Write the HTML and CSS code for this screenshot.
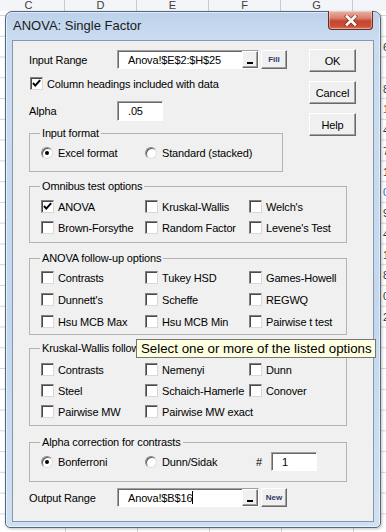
FILE: index.html
```html
<!DOCTYPE html>
<html lang="en">
<head>
  <meta charset="UTF-8" />
  <title>ANOVA: Single Factor</title>
  <link rel="stylesheet" href="styles.css">
</head>
<body>
  <div class="sheet">
    <!-- Spreadsheet column headers behind the dialog -->
    <div class="col-heads">
      <span>C</span><span>D</span><span>E</span><span>F</span><span>G</span>
    </div>

    <div class="desk">
      <div class="edge-left"></div>

      <!-- Dialog window -->
      <div class="window">
        <div class="titlebar">
          <span class="title">ANOVA: Single Factor</span>
          <div class="close-btn">
            <svg width="14" height="11" viewBox="0 0 14 11">
              <path d="M3 1.5 L11 9.5 M11 1.5 L3 9.5" stroke="#5b1b12" stroke-width="4.4" stroke-linecap="square" opacity="0.55"/>
              <path d="M3 1.5 L11 9.5 M11 1.5 L3 9.5" stroke="#fff" stroke-width="2.6" stroke-linecap="square"/>
            </svg>
          </div>
        </div>

        <div class="client">
          <div class="top">
            <div class="top-main">
              <div class="field-row range-row">
                <span class="field-label">Input Range</span>
                <div class="textbox range">
                  <span class="value">Anova!$E$2:$H$25</span>
                  <span class="pick-btn"></span>
                </div>
                <span class="small-btn">Fill</span>
              </div>

              <div class="check-row">
                <span class="check"><svg width="11" height="11" viewBox="0 0 11 11"><path d="M2 5 L4.3 7.6 L9.2 2.2" stroke="#000" stroke-width="2" fill="none"/></svg></span>
                <span>Column headings included with data</span>
              </div>

              <div class="field-row alpha-row">
                <span class="field-label">Alpha</span>
                <div class="textbox short"><span class="value">.05</span></div>
              </div>

              <fieldset class="group input-format">
                <legend>Input format</legend>
                <div class="opts">
                  <span class="opt"><span class="radio on"></span>Excel format</span>
                  <span class="opt"><span class="radio"></span>Standard (stacked)</span>
                </div>
              </fieldset>
            </div>

            <div class="side-buttons">
              <span class="btn">OK</span>
              <span class="btn">Cancel</span>
              <span class="btn">Help</span>
            </div>
          </div>

          <fieldset class="group omnibus">
            <legend>Omnibus test options</legend>
            <div class="opts">
              <span class="opt"><span class="check"><svg width="11" height="11" viewBox="0 0 11 11"><path d="M2 5 L4.3 7.6 L9.2 2.2" stroke="#000" stroke-width="2" fill="none"/></svg></span>ANOVA</span>
              <span class="opt"><span class="check"></span>Kruskal-Wallis</span>
              <span class="opt"><span class="check"></span>Welch's</span>
              <span class="opt"><span class="check"></span>Brown-Forsythe</span>
              <span class="opt"><span class="check"></span>Random Factor</span>
              <span class="opt"><span class="check"></span>Levene's Test</span>
            </div>
          </fieldset>

          <fieldset class="group anova-follow">
            <legend>ANOVA follow-up options</legend>
            <div class="opts">
              <span class="opt"><span class="check"></span>Contrasts</span>
              <span class="opt"><span class="check"></span>Tukey HSD</span>
              <span class="opt"><span class="check"></span>Games-Howell</span>
              <span class="opt"><span class="check"></span>Dunnett's</span>
              <span class="opt"><span class="check"></span>Scheffe</span>
              <span class="opt"><span class="check"></span>REGWQ</span>
              <span class="opt"><span class="check"></span>Hsu MCB Max</span>
              <span class="opt"><span class="check"></span>Hsu MCB Min</span>
              <span class="opt"><span class="check"></span>Pairwise t test</span>
            </div>
          </fieldset>

          <fieldset class="group kw-follow">
            <legend>Kruskal-Wallis follow-up options</legend>
            <div class="opts">
              <span class="opt"><span class="check"></span>Contrasts</span>
              <span class="opt"><span class="check"></span>Nemenyi</span>
              <span class="opt"><span class="check"></span>Dunn</span>
              <span class="opt"><span class="check"></span>Steel</span>
              <span class="opt"><span class="check"></span>Schaich-Hamerle</span>
              <span class="opt"><span class="check"></span>Conover</span>
              <span class="opt"><span class="check"></span>Pairwise MW</span>
              <span class="opt"><span class="check"></span>Pairwise MW exact</span>
            </div>
          </fieldset>

          <fieldset class="group alpha-corr">
            <legend>Alpha correction for contrasts</legend>
            <div class="opts">
              <span class="opt"><span class="radio on"></span>Bonferroni</span>
              <span class="opt"><span class="radio"></span>Dunn/Sidak</span>
              <span class="opt count">#<div class="textbox short"><span class="value">1</span></div></span>
            </div>
          </fieldset>

          <div class="field-row output-row">
            <span class="field-label">Output Range</span>
            <div class="textbox range">
              <span class="value">Anova!$B$16<span class="caret"></span></span>
              <span class="pick-btn"></span>
            </div>
            <span class="small-btn">New</span>
          </div>
        </div>
      </div>

      <div class="edge-right">
        <div>6</div><div>&nbsp;</div><div>8</div><div class="red">1</div><div>4</div>
        <div>7</div><div>1</div><div class="blue">0</div><div>9</div><div>4</div>
        <div>1</div><div>8</div><div>0</div><div>2</div>
      </div>
    </div>

    <div class="tooltip">Select one or more of the listed options</div>
  </div>
</body>
</html>
```

FILE: styles.css
```css
* {
  box-sizing: border-box;
}

body {
  margin: 0;
  width: 386px;
  height: 532px;
  overflow: hidden;
  font-family: 'Liberation Sans', Arial, sans-serif;
  font-size: 11px;
  color: #000;
  background: #fff;
}

/* Spreadsheet behind the dialog */
.sheet {
  position: relative;
  height: 532px;
  background-color: #fff;
  background-image:
    linear-gradient(to right, #d6d6d6 1px, transparent 1px),
    linear-gradient(to bottom, transparent 19.77px, #d6d6d6 19.77px);
  background-size: 72px 100%, 100% 20.77px;
  background-position: 65px 0, 0 16px;
}

.col-heads {
  display: flex;
  height: 11px;
  margin-left: -7px;
  background: #f3f5f8;
  overflow: hidden;
}

.col-heads span {
  flex: 0 0 72px;
  border-right: 1px solid #c7ccd3;
  text-align: center;
  font-size: 11px;
  line-height: 11px;
  color: #3c3c3c;
}

.desk {
  display: flex;
  align-items: flex-start;
  height: 521px;
}

.edge-left {
  width: 5px;
}

.edge-right {
  width: 5px;
  overflow: hidden;
  padding: 26px 0 0 2px;
  font-size: 11px;
  line-height: 20.77px;
  white-space: nowrap;
  color: #333;
}

.edge-right .red {
  color: #b5431f;
}

.edge-right .blue {
  color: #1f5fb5;
}

/* Window frame */
.window {
  width: 376px;
  height: 517px;
  display: flex;
  flex-direction: column;
  padding: 0 6px 5px 6px;
  border: 1px solid #55677f;
  border-radius: 7px 7px 5px 5px;
  background: linear-gradient(to bottom, #bcd2ea, #cadcf0 28px, #c3d8ef 60%, #cfe0f2);
  box-shadow: inset 0 0 0 1px rgba(255, 255, 255, 0.55), 1px 1px 3px rgba(0, 0, 0, 0.25);
}

.titlebar {
  display: flex;
  align-items: flex-start;
  height: 28px;
}

.title {
  margin-top: 6px;
  padding-left: 1px;
  font-size: 13px;
  color: #1b1b1b;
}

.close-btn {
  width: 45px;
  height: 19px;
  margin: -1px 1px 0 auto;
  display: flex;
  justify-content: center;
  align-items: center;
  border: 1px solid #6c2a22;
  border-top: none;
  border-radius: 0 0 4px 4px;
  background: linear-gradient(to bottom, #eab1a4, #d9806f 40%, #c7452f 55%, #c9503a 85%, #dc7a63);
  box-shadow: inset 0 0 0 1px rgba(255, 255, 255, 0.35);
}

.client {
  flex: 1;
  padding: 8px 0 0 16px;
  letter-spacing: -0.15px;
  background: #f0f0f0;
  border: 1px solid #8697ae;
}

/* Top section: range inputs and dialog buttons */
.top {
  display: flex;
  align-items: flex-start;
}

.top-main {
  width: 258px;
}

.side-buttons {
  display: flex;
  flex-direction: column;
  gap: 9px;
  margin-left: 22px;
}

.btn {
  display: flex;
  justify-content: center;
  align-items: center;
  width: 47px;
  height: 23px;
  background: #f0f0f0;
  border: 1px solid;
  border-color: #fff #696969 #696969 #fff;
  box-shadow: inset -1px -1px 0 #a0a0a0;
}

.field-row {
  display: flex;
  align-items: center;
}

.range-row {
  margin-top: 1px;
}

.field-label {
  width: 88px;
}

.textbox {
  display: flex;
  align-items: center;
  height: 19px;
  padding-left: 10px;
  background: #fff;
  border: 1px solid;
  border-color: #a0a0a0 #fff #fff #a0a0a0;
  box-shadow: inset 1px 1px 0 #696969;
}

.textbox.range {
  width: 142px;
}

.textbox.short {
  width: 46px;
}

.textbox .value {
  flex: 1;
  display: flex;
  align-items: center;
  white-space: nowrap;
}

.caret {
  width: 1px;
  height: 13px;
  background: #000;
}

.pick-btn {
  display: flex;
  justify-content: center;
  align-items: flex-end;
  align-self: flex-end;
  width: 16px;
  height: 17px;
  padding-bottom: 3px;
  background: #f0f0f0;
  border: 1px solid;
  border-color: #fff #696969 #696969 #fff;
  box-shadow: inset -1px -1px 0 #a0a0a0;
}

.pick-btn::after {
  content: '';
  width: 6px;
  height: 2px;
  background: #000;
}

.small-btn {
  display: flex;
  justify-content: center;
  align-items: center;
  width: 26px;
  height: 19px;
  margin-left: 2px;
  font-size: 8px;
  font-weight: bold;
  letter-spacing: 0;
  color: #2d3b6a;
  background: #f0f0f0;
  border: 1px solid;
  border-color: #fff #696969 #696969 #fff;
  box-shadow: inset -1px -1px 0 #a0a0a0;
}

.check-row {
  display: flex;
  align-items: center;
  gap: 4px;
  height: 13px;
  margin-top: 8px;
  padding-left: 1px;
}

.alpha-row {
  margin-top: 11px;
}

.alpha-row .textbox {
  height: 20px;
}

/* Group boxes */
.group {
  margin: 0;
  padding: 0 0 0 11px;
  border: 1px solid #b3b3b3;
}

.group legend {
  margin-left: -1px;
  padding: 0 2px;
  line-height: 14px;
}

.opts {
  display: grid;
  grid-template-columns: 104px 104px auto;
}

.opt {
  display: flex;
  align-items: center;
  gap: 4px;
  height: 13px;
  white-space: nowrap;
}

.check {
  display: flex;
  justify-content: center;
  align-items: center;
  flex: 0 0 13px;
  width: 13px;
  height: 13px;
  background: #fff;
  border: 1px solid;
  border-color: #7f7f7f #d8d8d8 #d8d8d8 #7f7f7f;
  box-shadow: inset 1px 1px 0 #4a4a4a;
}

.radio {
  display: flex;
  justify-content: center;
  align-items: center;
  flex: 0 0 12px;
  width: 12px;
  height: 12px;
  margin-right: 1px;
  border-radius: 50%;
  background: #fff;
  border: 1px solid;
  border-color: #8a8a8a #dedede #dedede #8a8a8a;
  box-shadow: inset 1px 1px 0 #5c5c5c;
}

.radio.on::after {
  content: '';
  width: 4px;
  height: 4px;
  border-radius: 50%;
  background: #000;
}

.input-format {
  width: 254px;
  margin-top: 5px;
  padding-top: 6px;
  padding-bottom: 12px;
}

.omnibus,
.anova-follow,
.kw-follow,
.alpha-corr {
  width: 318px;
}

.omnibus {
  margin-top: 7px;
  padding-top: 7px;
  padding-bottom: 8px;
}

.omnibus .opts {
  row-gap: 8px;
}

.anova-follow {
  margin-top: 8px;
  padding-top: 6px;
  padding-bottom: 6px;
}

.anova-follow .opts {
  row-gap: 9px;
}

.kw-follow {
  margin-top: 6px;
  padding-top: 8px;
  padding-bottom: 7px;
}

.kw-follow .opts {
  row-gap: 8px;
}

.alpha-corr {
  margin-top: 9px;
  padding-top: 3px;
  padding-bottom: 10px;
}

.alpha-corr .opts {
  align-items: center;
}

.alpha-corr .opt.count {
  gap: 9px;
  height: 19px;
  padding-left: 7px;
}

.output-row {
  margin-top: 6px;
}

/* Tooltip over the dialog */
.tooltip {
  position: absolute;
  left: 136px;
  top: 339px;
  width: 240px;
  height: 19px;
  padding-left: 4px;
  font-size: 13.3px;
  line-height: 17px;
  white-space: nowrap;
  background: #ffffe1;
  border: 1px solid #767676;
}
```
